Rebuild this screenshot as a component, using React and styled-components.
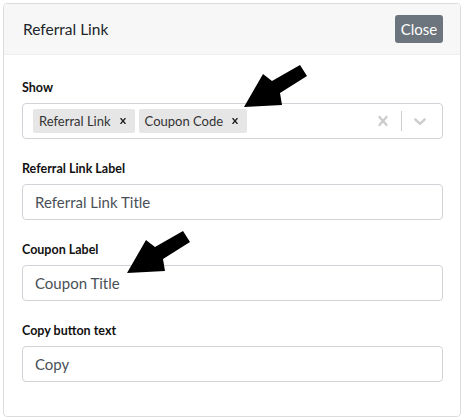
import React from 'react';
import styled, { createGlobalStyle } from 'styled-components';

const GlobalStyle = createGlobalStyle`
  body {
    margin: 3px;
    background: #fff;
    font-family: Lato, "Open Sans", sans-serif;
    color: #212529;
  }
`;

const CROSS = 'M14.348 14.849c-0.469 0.469-1.229 0.469-1.697 0l-2.651-3.030-2.651 3.029c-0.469 0.469-1.229 0.469-1.697 0-0.469-0.469-0.469-1.229 0-1.697l2.758-3.15-2.759-3.152c-0.469-0.469-0.469-1.228 0-1.697s1.228-0.469 1.697 0l2.652 3.031 2.651-3.031c0.469-0.469 1.228-0.469 1.697 0s0.469 1.229 0 1.697l-2.758 3.152 2.758 3.15c0.469 0.469 0.469 1.229 0 1.698z';
const CHEVRON = 'M4.516 7.548c0.436-0.446 1.043-0.481 1.576 0l3.908 3.747 3.908-3.747c0.533-0.481 1.141-0.446 1.574 0 0.436 0.445 0.408 1.197 0 1.615-0.406 0.418-4.695 4.502-4.695 4.502-0.217 0.223-0.502 0.335-0.787 0.335s-0.57-0.112-0.789-0.335c0 0-4.287-4.084-4.695-4.502s-0.436-1.17 0-1.615z';

const Icon = ({ d, size = 20, color = '#ccc' }) => (
  <svg width={size} height={size} viewBox="0 0 20 20" fill={color} aria-hidden="true">
    <path d={d} />
  </svg>
);

const Arrow = ({ left, top }) => (
  <ArrowSvg $left={left} $top={top} width="64" height="44" viewBox="0 0 64 44">
    <polygon points="0,42 19,9 28,16 56,0 63,11 36,28 38,40" fill="#000" />
  </ArrowSvg>
);

export default function App() {
  return (
    <>
      <GlobalStyle />
      <Card>
        <Header>
          <Title>Referral Link</Title>
          <CloseButton>Close</CloseButton>
        </Header>
        <Body>
          <Group>
            <Label>Show</Label>
            <SelectBox>
              <Values>
                <Chip>
                  <ChipText>Referral Link</ChipText>
                  <ChipRemove><Icon d={CROSS} size={12} color="#222" /></ChipRemove>
                </Chip>
                <Chip>
                  <ChipText>Coupon Code</ChipText>
                  <ChipRemove><Icon d={CROSS} size={12} color="#222" /></ChipRemove>
                </Chip>
              </Values>
              <Indicators>
                <IndicatorBtn><Icon d={CROSS} /></IndicatorBtn>
                <Separator />
                <IndicatorBtn><Icon d={CHEVRON} /></IndicatorBtn>
              </Indicators>
            </SelectBox>
          </Group>
          <Group>
            <Label>Referral Link Label</Label>
            <Input defaultValue="Referral Link Title" />
          </Group>
          <Group>
            <Label>Coupon Label</Label>
            <Input defaultValue="Coupon Title" />
          </Group>
          <Group>
            <Label>Copy button text</Label>
            <Input defaultValue="Copy" />
          </Group>
        </Body>
        <Arrow left={240} top={61} />
        <Arrow left={123} top={227} />
      </Card>
    </>
  );
}

const Card = styled.div`
  position: relative;
  border: 1px solid #dcdcdc;
  border-radius: 4px;
  background: #fff;
  overflow: hidden;
`;

const Header = styled.div`
  display: flex;
  align-items: center;
  justify-content: space-between;
  height: 51px;
  padding: 0 17px 0 19px;
  background: #f7f7f7;
  border-bottom: 1px solid #efefef;
  box-sizing: border-box;
`;

const Title = styled.div`
  font-size: 15.5px;
  color: #212529;
`;

const CloseButton = styled.button`
  height: 28px;
  width: 48px;
  padding: 0;
  border: none;
  border-radius: 3px;
  background: #6c757d;
  color: #fff;
  font-family: inherit;
  font-size: 15px;
`;

const Body = styled.div`
  padding: 24px 17px 13px 18px;
`;

const Group = styled.div`
  margin-bottom: 21px;
`;

const Label = styled.div`
  font-size: 12.5px;
  font-weight: 700;
  line-height: 18px;
  margin-bottom: 6px;
  color: #111;
`;

const SelectBox = styled.div`
  display: flex;
  align-items: center;
  height: 36px;
  box-sizing: border-box;
  border: 1px solid #cfd3d8;
  border-radius: 4px;
  padding: 0 8px 0 10px;
`;

const Values = styled.div`
  flex: 1;
  display: flex;
  gap: 4px;
`;

const Chip = styled.div`
  display: flex;
  align-items: center;
  height: 24px;
  background: #e6e6e6;
  border-radius: 2px;
  padding: 0 6px;
`;

const ChipText = styled.span`
  font-size: 13px;
  color: #333;
`;

const ChipRemove = styled.span`
  display: flex;
  margin-left: 6px;
`;

const Indicators = styled.div`
  display: flex;
  align-items: center;
`;

const IndicatorBtn = styled.span`
  display: flex;
  padding: 0 4px;
`;

const Separator = styled.span`
  width: 1px;
  height: 20px;
  background: #ccc;
  margin: 0 4px;
`;

const Input = styled.input`
  display: block;
  width: 100%;
  height: 36px;
  box-sizing: border-box;
  border: 1px solid #cfd3d8;
  border-radius: 4px;
  padding: 0 12px;
  font-family: inherit;
  font-size: 15px;
  color: #495057;
  outline: none;
`;

const ArrowSvg = styled.svg`
  position: absolute;
  left: ${p => p.$left}px;
  top: ${p => p.$top}px;
  pointer-events: none;
`;
